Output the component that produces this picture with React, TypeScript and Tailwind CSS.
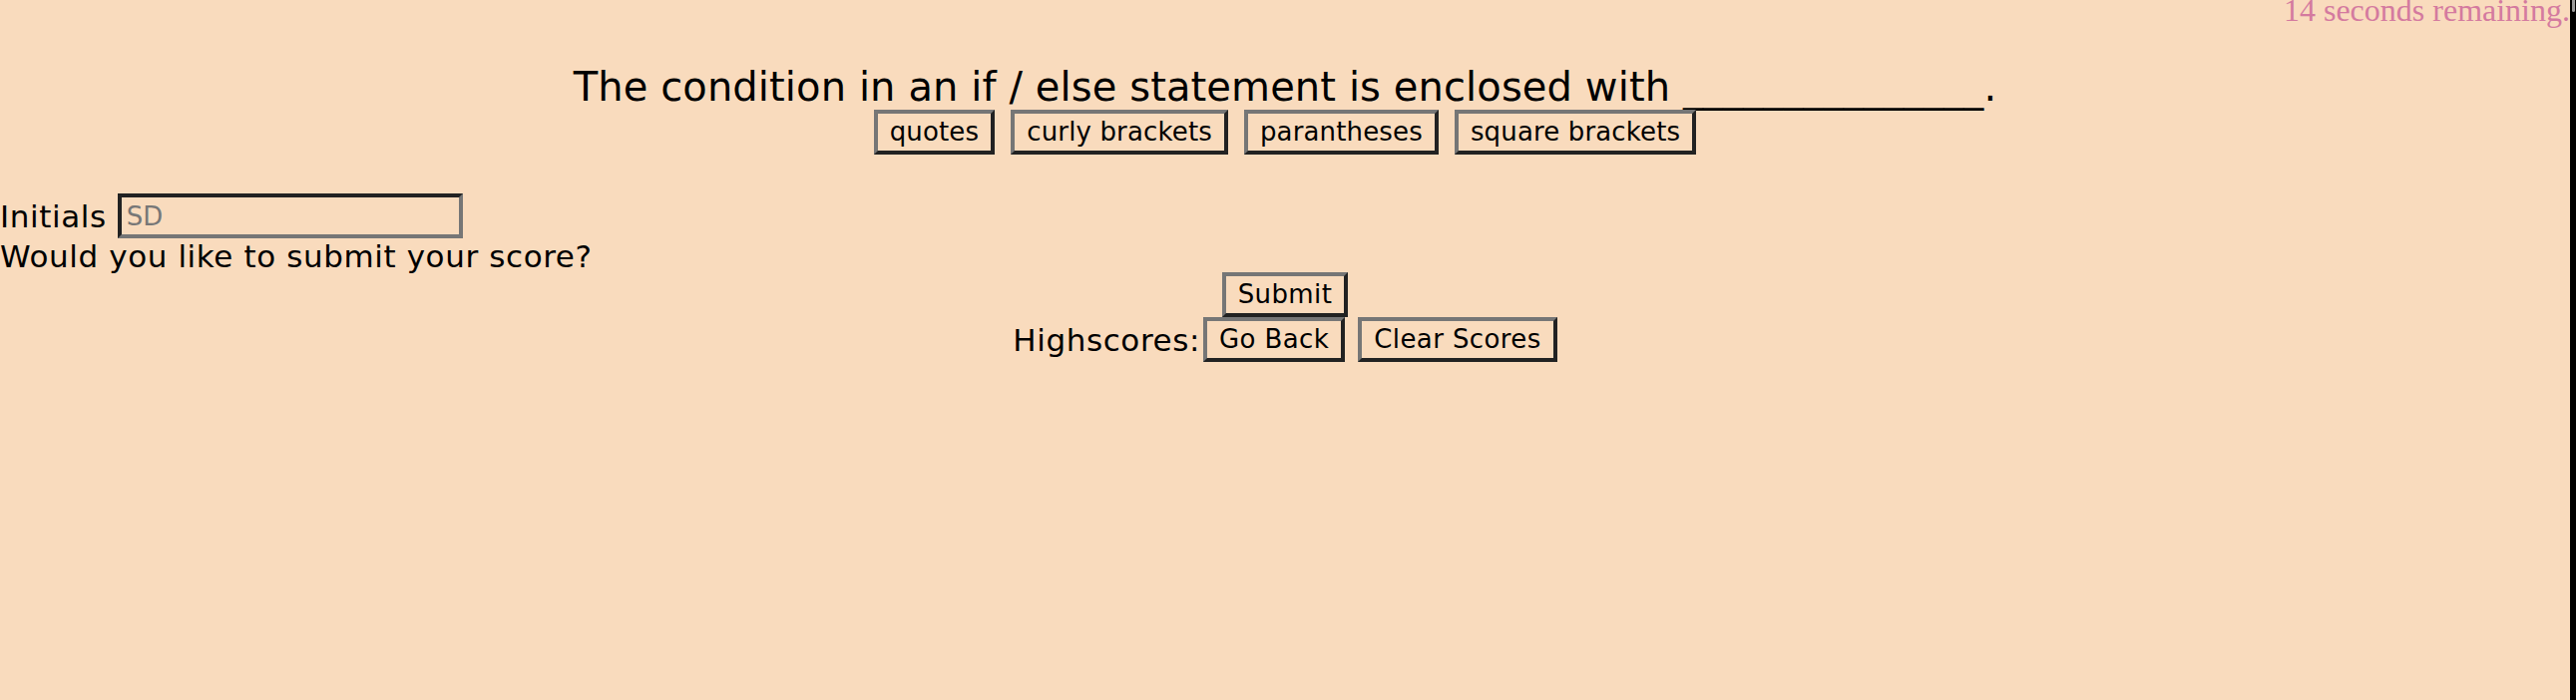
const btn =
  'inline-block bg-[#f9dbbd] text-black text-[26px] leading-[33px] px-[12px] py-[2px] border-[4px] border-solid border-t-[#767676] border-l-[#767676] border-b-[#222222] border-r-[#222222]'

const answers = ['quotes', 'curly brackets', 'parantheses', 'square brackets']

export default function App() {
  return (
    <div className="flex min-h-[702px] w-full bg-[#f9dbbd] font-['DejaVu_Sans',sans-serif] text-black overflow-hidden">
      <div className="flex-1 min-w-0">
        {/* timer */}
        <div className="-mt-[8px] text-right font-['Liberation_Serif',serif] text-[32px] leading-[36px] text-[#d47a9f]">
          14 seconds remaining.
        </div>

        {/* question */}
        <div className="mt-[36px] text-center">
          <h1 className="text-[40px] leading-[46px] font-normal tracking-[0.1px]">
            The condition in an if / else statement is enclosed with _______________.
          </h1>
          <div className="flex justify-center gap-[16px]">
            {answers.map(a => (
              <button key={a} className={btn + ' tracking-[0.15px]'}>{a}</button>
            ))}
          </div>
        </div>

        {/* score form */}
        <div className="mt-[39px] text-[31px] leading-[36px] tracking-[0.6px]">
          <div className="flex items-center gap-[11px]">
            <label>Initials</label>
            <input
              placeholder="SD"
              className="w-[346px] h-[45px] bg-transparent text-[26px] tracking-normal px-[5px] border-[4px] border-solid border-t-[#222222] border-l-[#222222] border-b-[#767676] border-r-[#767676] placeholder:text-[#777777] outline-none"
            />
          </div>
          <p className="-mb-[2px]">Would you like to submit your score?</p>
          <div className="flex justify-center">
            <button className={btn + ' tracking-[0.4px]'}>Submit</button>
          </div>
          <div className="flex justify-center items-center">
            <span>Highscores:</span>
            <button className={btn + ' tracking-[0.4px] ml-[3px]'}>Go Back</button>
            <button className={btn + ' tracking-[0.4px] ml-[13px]'}>Clear Scores</button>
          </div>
        </div>
      </div>

      {/* scrollbar */}
      <div className="w-[6px] shrink-0 bg-black flex flex-col items-center">
        <div className="w-[3px] h-[12px] bg-[#9a9a9a] rounded-b-sm" />
      </div>
    </div>
  )
}
